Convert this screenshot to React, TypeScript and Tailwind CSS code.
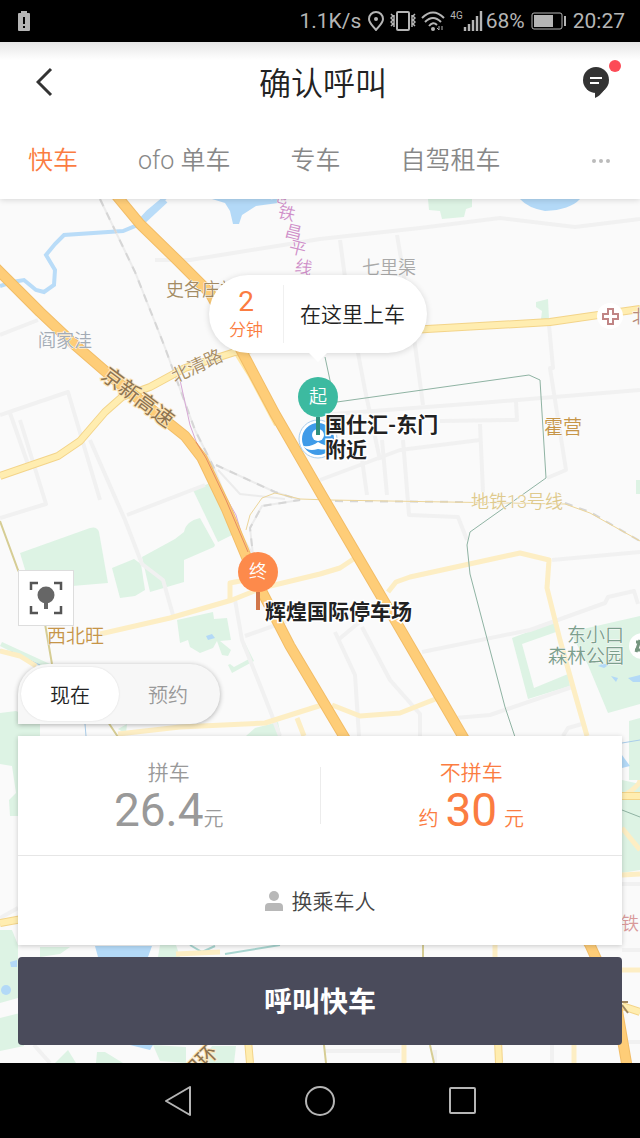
import { useState } from "react";
import type { ReactNode } from "react";

const TABS = ["快车", "ofo 单车", "专车", "自驾租车"];

const PARKS = [
  "M20 553 L90 528 Q97 526 99 532 L108 583 L72 586 L30 586 Z",
  "M112 568 L134 559 L141 564 L145 590 L135 596 L120 598 Z",
  "M142 557 L175 539 L184 532 Q186 521 200 518 L215 545 L214 547 L184 560 L184 582 L150 592 Z",
  "M193 490 L210 483 L232 535 L218 542 Z",
  "M177 620 L213 612 L214 619 L227 618 L231 640 L220 641 L231 650 L228 656 L222 655 L217 641 L213 648 L200 653 L190 647 L188 640 L180 643 Z",
  "M242 645 L245 643 L254 661 L232 673 L228 665 L230 664 L234 667 L249 659 Z",
  "M428 199 L472 199 L472 207 L466 209 L464 217 L442 219 L440 211 L429 210 Z",
  "M536 302 L548 299 L549 319 L541 319 L542 311 L536 307 Z",
  "M512 638 L554 622 L556 632 L522 644 L534 688 L568 674 L570 686 L528 699 Z",
  "M570 632 L640 616 L640 704 L608 713 L588 665 Z",
  "M636 480 L640 480 L640 494 L636 494 Z",
  "M629 721 L640 718 L640 780 L629 780 Z",
  "M0 713 L16 711 L40 722 L40 736 L18 740 L18 816 L10 816 L9 800 L16 793 L12 766 L0 764 Z",
  "M2 642 L50 664 L44 668 L0 646 Z",
  "M0 930 L12 930 L18 945 L18 998 L0 1003 Z",
  "M0 1018 L24 1012 L24 1046 L0 1051 Z",
  "M55 1063 L68 1050 L76 1063 Z",
  "M96 1063 L97 1052 L105 1052 L123 1063 Z",
  "M153 1045 L186 1047 L186 1063 L160 1061 Z",
  "M200 1063 L212 1046 L236 1046 L234 1063 Z",
  "M246 736 L255 728 L278 722 L281 736 Z",
  "M118 729 L127 724 L126 734 Z",
  "M622 780 L640 784 L640 870 L622 873 Z",
  "M40 947 L70 947 L60 954 L40 957 Z M160 945 L176 945 L180 957 L158 957 Z",
];

const WATER = [
  "M212 199 L250 199 L278 199 L278 203 L256 206 L242 215 L239 224 L233 224 L230 211 L225 203 Z",
  "M520 199 L580 199 Q570 210 545 211 Q528 208 520 199 Z",
  "M206 636 L212 634 L215 638 L208 640 Z",
  "M628 678 L640 675 L640 682 L633 682 Z M611 676 L618 678 L616 682 Z M610 664 L604 668 L598 666 L602 664 Z",
  "M95 946 L152 946 L148 957 L98 957 Z",
  "M622 755 L630 766 L622 768 Z",
  "M10 962 L17 960 L17 967 L11 967 Z",
  "M130 1045 L153 1045 L150 1050 Z",
];

const MINOR_ROADS = [
  "M0 335 L38 320",
  "M155 260 L190 260 L320 239 L420 228 L500 218 L575 227 L640 219",
  "M340 240 L348 300 L365 390 L380 460",
  "M397 235 L408 300 L415 345 L423 405",
  "M549 325 L553 368 L550 368 L566 470 L547 478",
  "M320 415 L480 403 L640 390",
  "M0 415 L68 392 L100 500 M10 413 L30 470",
  "M0 518 L46 504 L20 420",
  "M90 440 L125 520 L142 564 L163 580 L173 615",
  "M127 515 L205 485",
  "M320 480 L400 450 L480 440 M403 440 L409 515 L458 517 L467 540",
  "M480 424 L483 492 M360 445 L367 495 M382 440 L387 495",
  "M440 421 L517 420 L516 402",
  "M552 560 L640 552",
  "M422 652 L530 630 L605 603 L608 597 L634 591 L638 604",
  "M235 600 L242 640 L262 690 L280 736",
  "M245 636 L290 620",
  "M362 627 L390 680 L420 714 L420 736",
  "M335 632 L355 675 L359 736",
  "M338 640 L362 620",
  "M455 718 L490 715 L572 687 M563 736 L568 728 L582 724",
  "M0 918 L18 908",
  "M622 884 L640 884 M622 950 L640 950",
  "M34 1045 L50 1063 M435 1050 L435 1063 M325 1051 L400 1051",
  "M552 1045 L552 1063 M622 1042 L640 1042",
];

const PALE_ROADS = [
  "M100 634 L170 618 L232 600 L262 588 L320 574 L340 568 L355 558",
  "M230 600 L230 583 L250 579",
  "M388 592 L396 582 L410 577 L520 553 L549 560 L547 588 L560 640 L575 694 L587 736",
  "M118 734 L180 727 L265 723 L325 704 M297 718 L304 736",
  "M332 705 L360 716 L400 713 L438 698",
  "M0 651 L20 656 L36 666",
  "M622 875 L640 874 M622 970 L640 970",
  "M404 1045 L404 1063 M574 1045 L574 1063 M495 945 L495 957",
  "M176 954 L220 952 M625 795 Q640 785 640 780 M622 828 L640 850",
];

const YELLOW_ROADS = [
  "M0 476 L58 456 L80 441 L105 412 L122 397 L150 387 L185 368 L235 352 L320 337 L427 329 L550 322 L640 309",
  "M0 923 L22 919",
  "M622 796 L640 796 M622 1006 L640 1012",
  "M248 1040 L250 1063 M498 1040 L499 1063",
];

const HIGHWAYS = [
  "M-4 268 L40 312 L75 345 L120 384 L185 436 L202 458 L226 508 L256 580 L290 646 L346 740",
  "M116 195 L140 224 L178 261 L210 293 L240 348 L275 414 L320 492 L388 608 L466 742 L590 945 L616 1002 L627 1066",
];

const LINE_NAME = [
  { char: "地", x: 270, y: 200 },
  { char: "铁", x: 277, y: 217 },
  { char: "昌", x: 284, y: 236 },
  { char: "平", x: 288, y: 252 },
  { char: "线", x: 294, y: 271 },
];

function Lines({ paths, color, width }: { paths: string[]; color: string; width: number }) {
  return (
    <g fill="none" stroke={color} strokeWidth={width} strokeLinejoin="round">
      {paths.map((d) => (
        <path key={d} d={d} />
      ))}
    </g>
  );
}

function CityMap() {
  return (
    <svg
      className="absolute inset-0 h-full w-full"
      viewBox="0 199 640 864"
      preserveAspectRatio="xMidYMin slice"
      aria-label="地图"
    >
      <rect y="199" width="640" height="864" fill="#fafafa" />
      <g fill="#ddf3e4">
        {PARKS.map((d) => (
          <path key={d} d={d} />
        ))}
      </g>
      <g fill="#b3d9f7">
        {WATER.map((d) => (
          <path key={d} d={d} />
        ))}
      </g>
      <path
        d="M166 197 L148 212 L135 226 L123 231 L64 235 L55 244 L46 255 L55 270 L54 285 L44 292 L36 290 L24 280 L12 282 L0 286"
        fill="none"
        stroke="#b9dcf8"
        strokeWidth="4"
      />
      <path d="M138 225 L165 200" stroke="#b9dcf8" strokeWidth="7" />
      <path d="M0 650 L12 652 L40 665 M85 724 L86 736 M622 743 L640 740" fill="none" stroke="#a9cdea" />
      <path d="M190 945 L202 952 L215 946 M225 954 L280 945" fill="none" stroke="#a8d5d0" strokeWidth="2" />

      <Lines paths={MINOR_ROADS} color="#f1f1f1" width={4} />
      <Lines paths={PALE_ROADS} color="#fdeec4" width={5} />

      <g fill="none" stroke="#ececec" strokeWidth="2">
        <path d="M100 199 L135 272 L164 345 L195 430 L215 470 L238 530 L254 556" />
        <path d="M216 465 L275 492 L300 500 L262 506 L250 528 L253 555 M218 470 L240 494 L285 499" />
      </g>
      <g fill="none" stroke="#d6d6d6" strokeWidth="2" strokeDasharray="8 7">
        <path d="M100 199 L135 272 L164 345 L195 430 L215 470" />
        <path d="M216 465 L275 492 L300 500 L262 506 L250 528 L253 555 M320 501 L470 502" />
        <path d="M565 503 L590 512 L640 541" />
      </g>
      <path
        d="M246 530 L250 515 L262 498 L275 493 L300 499 L330 500 L565 504 L590 513 L640 541"
        fill="none"
        stroke="#ecd59a"
      />
      <path d="M180 380 L190 425 L200 452 L236 515 L248 556" fill="none" stroke="#d7a8d6" />
      <path
        d="M325 357 L331 385 L337 402 L529 375 L540 380 L546 478 L470 532 L467 545 L470 574 L505 707 L516 740 M622 810 L640 817"
        fill="none"
        stroke="#8fb3a3"
      />
      <path
        d="M0 521 L18 570 L44 618 L52 664 M108 722 L120 740 M324 1045 L326 1063 M430 1045 L434 1063 M423 945 L423 957"
        fill="none"
        stroke="#d6cd94"
        strokeWidth="2"
      />

      <path d="M235 352 L250 376 L276 425" fill="none" stroke="#ffe6a3" strokeWidth="4" />
      <Lines paths={YELLOW_ROADS} color="#f3d489" width={8} />
      <Lines paths={YELLOW_ROADS} color="#ffedb0" width={6} />
      <Lines paths={HIGHWAYS} color="#f2bd67" width={11} />
      <Lines paths={HIGHWAYS} color="#fecd78" width={9} />
      <path d="M196 442 L206 458 L226 500 L248 552" fill="none" stroke="#e58a62" />

      {/* 地名 */}
      <g fontWeight="350" stroke="#fafafa" strokeWidth="1" paintOrder="stroke">
        <g fontSize="18">
          <text x="166" y="296" fill="#a38b63">史各庄站</text>
          <text x="38" y="347" fill="#a3abb5">阎家洼</text>
          <text x="362" y="274" fill="#a9a9a9">七里渠</text>
          <text x="471" y="508" fill="#dfca8d">地铁13号线</text>
          <text x="175" y="383" fill="#a88d62" transform="rotate(-25 175 383)">北清路</text>
          <text x="632" y="323" fill="#b78a7a">北</text>
          <text x="621" y="930" fill="#d99a9a">铁</text>
        </g>
        <g fontSize="19">
          <text x="544" y="434" fill="#c69548">霍营</text>
          <text x="47" y="643" fill="#c69548">西北旺</text>
          <text x="567" y="642" fill="#7c9f8d">东小口</text>
          <text x="548" y="663" fill="#7c9f8d">森林公园</text>
        </g>
        <g fontSize="17" fill="#cf8fc9">
          {LINE_NAME.map(({ char, x, y }) => (
            <text key={char} x={x} y={y} transform={`rotate(14 ${x} ${y})`}>
              {char}
            </text>
          ))}
        </g>
      </g>
      <g fontSize="21" fill="#8d7350" stroke="#fbe3b6" strokeWidth="2" paintOrder="stroke">
        <text x="100" y="378" transform="rotate(37 100 378)">京新高速</text>
        <text x="190" y="1083" transform="rotate(-45 190 1083)">四环</text>
        <path d="M622 1002 L628 1002 M622 1005 L628 1013" strokeWidth="2" stroke="#a08860" />
      </g>

      {/* 医院与公园标记 */}
      <circle cx="610" cy="316" r="13" fill="#fff" />
      <path
        d="M608 309 h5 v5 h5 v5 h-5 v5 h-5 v-5 h-5 v-5 h5 Z"
        fill="none"
        stroke="#c08585"
        strokeWidth="2"
      />
      <circle cx="642" cy="646" r="13" fill="#fff" />
      <path d="M636 642 h8 M635 650 h9 M640 640 l-4 12" stroke="#75957f" strokeWidth="3" />
      <circle cx="6" cy="990" r="5" fill="#b3d9f7" />

      {/* 我的位置 */}
      <circle cx="318" cy="439" r="19" fill="#fff" stroke="#a9cdec" />
      <circle cx="318" cy="439" r="16" fill="#3f9be8" />
      <circle cx="318" cy="435" r="6" fill="#fff" />
      <path d="M303 446 Q312 447 318 442 Q326 447 333 446 Q330 451 318 449 Q308 452 303 446" fill="#fff" />
    </svg>
  );
}

function StatusBar() {
  return (
    <div className="flex h-[42px] flex-none items-center bg-black pr-[15px] pl-[18px] text-[21px] leading-6 text-[#b5b5b5]">
      <svg width="12" height="20" viewBox="0 0 12 20" aria-hidden>
        <path d="M3 0 h6 v2 h2 q1 0 1 1 v16 q0 1 -1 1 H1 q-1 0 -1 -1 V3 q0 -1 1 -1 h2 Z" fill="#b5b5b5" />
        <path d="M6 6 v7 M6 15 v2" stroke="#000" strokeWidth="2" />
      </svg>
      <span className="ml-auto">1.1K/s</span>
      <svg className="ml-[7px]" width="16" height="20" viewBox="0 0 16 20" fill="none" stroke="#b5b5b5" strokeWidth="2" aria-hidden>
        <path d="M8 19 C5 15 1 12 1 8 a7 7 0 0 1 14 0 C15 12 11 15 8 19 Z" />
        <circle cx="8" cy="8" r="2" fill="#b5b5b5" stroke="none" />
      </svg>
      <svg className="ml-[6px]" width="26" height="20" viewBox="0 0 26 20" fill="none" stroke="#b5b5b5" strokeWidth="2" aria-hidden>
        <rect x="7" y="1" width="12" height="18" rx="1" />
        <path
          d="M1 3 l2 2 -2 2 2 2 -2 2 2 2 -2 2 M4 4 v12 M25 3 l-2 2 2 2 -2 2 2 2 -2 2 2 2 M22 4 v12"
          strokeWidth="1.5"
        />
      </svg>
      <svg className="ml-[5px]" width="24" height="20" viewBox="0 0 24 20" fill="none" stroke="#b5b5b5" strokeWidth="2" aria-hidden>
        <path d="M1 7 Q12 -4 23 7 M4 11 Q12 3 20 11 M8 15 Q12 10 16 14" />
        <circle cx="12" cy="18" r="2" fill="#b5b5b5" stroke="none" />
        <path d="M18 15 v4 l-2 -2 M21 19 v-4" strokeWidth="1" />
      </svg>
      <span className="ml-[5px] self-start pt-[9px] text-[10px] leading-[13px]">4G</span>
      <svg width="20" height="20" viewBox="0 0 20 20" stroke="#b5b5b5" strokeWidth="2.4" aria-hidden>
        <path d="M2 20 v-4 M6 20 v-7 M10 20 v-11 M14 20 v-15 M18 20 V0" />
      </svg>
      <span className="ml-[3px]">68%</span>
      <svg className="ml-[6px]" width="36" height="18" viewBox="0 0 36 18" aria-hidden>
        <rect x="1" y="1" width="30" height="16" rx="2" fill="none" stroke="#b5b5b5" />
        <rect x="3" y="3" width="19" height="12" fill="#b5b5b5" />
        <path d="M34 4 v10" stroke="#b5b5b5" strokeWidth="2" />
      </svg>
      <span className="ml-[6px]">20:27</span>
    </div>
  );
}

function Header() {
  const [active, setActive] = useState(TABS[0]);
  return (
    <header className="relative z-10 flex-none bg-linear-to-b from-[#e6e6e6] to-white to-[18px] shadow-[0_1px_6px_rgba(0,0,0,0.15)]">
      <div className="flex h-20 items-center justify-between pr-[30px] pl-9">
        <button type="button" aria-label="返回" className="flex w-8 items-center">
          <svg width="18" height="30" viewBox="0 0 18 30" fill="none" stroke="#333" strokeWidth="3" aria-hidden>
            <path d="M15 2 L2 15 L15 28" />
          </svg>
        </button>
        <h1 className="pt-1 text-[32px] leading-10 font-[350] text-[#222]">确认呼叫</h1>
        <button type="button" aria-label="消息" className="relative flex w-8 justify-end">
          <svg width="28" height="32" viewBox="0 0 28 32" aria-hidden>
            <circle cx="14" cy="14" r="13" fill="#333" />
            <path d="M13 25 v7 q6 -3 9 -8 Z" fill="#333" />
            <path d="M8 12 h12 M8 17 h9" stroke="#fff" strokeWidth="2" />
          </svg>
          <span className="absolute -top-1.5 -right-[11px] size-3 rounded-full bg-[#fc4b57]" />
        </button>
      </div>
      <nav className="flex h-[77px] items-center gap-[60px] pr-[30px] pl-7 text-[25px] font-[350]">
        {TABS.map((tab) => (
          <button
            key={tab}
            type="button"
            onClick={() => setActive(tab)}
            className={tab === active ? "whitespace-nowrap text-[#fb7c41]" : "whitespace-nowrap text-[#888]"}
          >
            {tab}
          </button>
        ))}
        <button type="button" aria-label="更多" className="ml-auto flex gap-[3px]">
          <span className="size-1 rounded-full bg-[#bbb]" />
          <span className="size-1 rounded-full bg-[#bbb]" />
          <span className="size-1 rounded-full bg-[#bbb]" />
        </button>
      </nav>
    </header>
  );
}

function Pin({ label, className, stick }: { label: string; className: string; stick: string }) {
  return (
    <div className="flex w-10 flex-col items-center">
      <span className={`flex size-10 items-center justify-center rounded-full text-lg leading-5 font-[350] text-white ${className}`}>
        {label}
      </span>
      <span className={`h-[18px] w-1 ${stick}`} />
    </div>
  );
}

function PlaceName({ children }: { children: ReactNode }) {
  return (
    <div className="text-[21px] leading-[25px] font-bold whitespace-nowrap text-[#222] [-webkit-text-stroke:3px_#fff] [paint-order:stroke]">
      {children}
    </div>
  );
}

function PickupBubble() {
  return (
    <div className="relative flex h-[78px] w-[218px] items-center rounded-full bg-white shadow-[0_1px_6px_rgba(0,0,0,0.15)]">
      <div className="flex w-[74px] flex-col items-center text-[#fb7c41]">
        <span className="text-[28px] leading-8">2</span>
        <span className="text-[17px] leading-6 font-[350]">分钟</span>
      </div>
      <div className="flex h-[58px] flex-1 items-center border-l border-[#f0f0f0] pt-1 pl-4 text-[21px] font-[350] text-[#222]">
        在这里上车
      </div>
      <svg className="absolute top-full left-[100px]" width="18" height="9" viewBox="0 0 18 9" aria-hidden>
        <path d="M0 0 H18 L9 9 Z" fill="#fff" />
      </svg>
    </div>
  );
}

function TimeSwitch() {
  const [when, setWhen] = useState("现在");
  return (
    <div className="flex h-[60px] w-[202px] rounded-full rounded-bl-none bg-[#f7f7f7] p-[3px] text-xl font-[350] shadow-[0_1px_5px_rgba(0,0,0,0.3)]">
      {["现在", "预约"].map((item) => (
        <button
          key={item}
          type="button"
          onClick={() => setWhen(item)}
          className={
            item === when
              ? "flex-1 rounded-full bg-white pt-1 text-[#222] shadow-[0_0_2px_rgba(0,0,0,0.12)]"
              : "flex-1 rounded-full pt-1 text-[#999]"
          }
        >
          {item}
        </button>
      ))}
    </div>
  );
}

function FareCard() {
  return (
    <section className="mt-3 bg-white shadow-[0_1px_5px_rgba(0,0,0,0.2)]">
      <div className="flex h-[119px] items-center">
        <button type="button" className="flex-1 pt-1 text-[#999]">
          <span className="block text-[21px] leading-6 font-[350]">拼车</span>
          <span className="flex h-[50px] items-baseline justify-center leading-[50px]">
            <span className="text-[46px]">26.4</span>
            <span className="text-xl font-[350]">元</span>
          </span>
        </button>
        <span className="h-[57px] w-px bg-[#ececec]" />
        <button type="button" className="flex-1 pt-1 text-[#fb7c41]">
          <span className="block text-[21px] leading-6 font-[350]">不拼车</span>
          <span className="flex h-[50px] items-baseline justify-center gap-[7px] leading-[50px]">
            <span className="text-xl font-[350]">约</span>
            <span className="text-[46px]">30</span>
            <span className="text-xl font-[350]">元</span>
          </span>
        </button>
      </div>
      <button
        type="button"
        className="flex h-[90px] w-full items-center justify-center gap-[9px] border-t border-[#e6e6e6] text-[21px] font-[350] text-[#444]"
      >
        <svg width="18" height="20" viewBox="0 0 18 20" fill="#b8b8b8" aria-hidden>
          <circle cx="9" cy="5" r="5" />
          <path d="M0 20 v-4 q0 -4 4 -4 h10 q4 0 4 4 v4 Z" />
        </svg>
        <span className="pt-1">换乘车人</span>
      </button>
    </section>
  );
}

function NavBar() {
  return (
    <div className="flex h-[75px] flex-none items-center justify-center gap-28 bg-black">
      <button type="button" aria-label="后退">
        <svg width="30" height="30" viewBox="0 0 30 30" fill="none" stroke="#b5b5b5" strokeWidth="2" strokeLinejoin="round" aria-hidden>
          <path d="M3 15 L27 1 V29 Z" />
        </svg>
      </button>
      <button type="button" aria-label="主屏幕">
        <svg width="30" height="30" viewBox="0 0 30 30" fill="none" stroke="#b5b5b5" strokeWidth="2" aria-hidden>
          <circle cx="15" cy="15" r="14" />
        </svg>
      </button>
      <button type="button" aria-label="最近任务">
        <svg width="30" height="30" viewBox="0 0 30 30" fill="none" stroke="#b5b5b5" strokeWidth="2" aria-hidden>
          <rect x="3" y="2" width="25" height="25" rx="1" />
        </svg>
      </button>
    </div>
  );
}

export default function App() {
  return (
    <div className="flex min-h-screen flex-col bg-white font-[Roboto,'Noto_Sans_CJK_SC',sans-serif]">
      <StatusBar />
      <Header />
      <main className="relative flex flex-1 flex-col justify-end overflow-hidden p-[18px]">
        <CityMap />

        {/* 起点 */}
        <div className="absolute top-[178px] left-[298px]">
          <Pin label="起" className="bg-[#3cbaa0]" stick="bg-[#2f8f7c]" />
        </div>
        <div className="absolute top-[214px] left-[325px]">
          <PlaceName>
            国仕汇-东门
            <br />
            附近
          </PlaceName>
        </div>
        <div className="absolute top-[76px] left-[209px]">
          <PickupBubble />
        </div>

        {/* 终点 */}
        <div className="absolute top-[353px] left-[238px]">
          <Pin label="终" className="bg-[#fd8a4b]" stick="bg-[#d1764a]" />
        </div>
        <div className="absolute top-[401px] left-[265px]">
          <PlaceName>辉煌国际停车场</PlaceName>
        </div>

        <div className="relative">
          <button
            type="button"
            aria-label="定位"
            className="mb-[38px] flex size-14 items-center justify-center border border-[#ddd] bg-white"
          >
            <svg width="34" height="34" viewBox="0 0 34 34" fill="none" stroke="#555" strokeWidth="2.5" aria-hidden>
              <path d="M2 9 V2 H9 M25 2 H32 V9 M32 25 V32 H25 M9 32 H2 V25" />
              <circle cx="17" cy="14" r="8.5" fill="#666" stroke="none" />
              <path d="M17 20 V28" stroke="#666" strokeWidth="4" />
            </svg>
          </button>
          <TimeSwitch />
          <FareCard />
          <button
            type="button"
            className="mt-3 h-[88px] w-full rounded-sm bg-[#4a4b5b] pt-1 text-[28px] font-bold text-white"
          >
            呼叫快车
          </button>
        </div>
      </main>
      <NavBar />
    </div>
  );
}
